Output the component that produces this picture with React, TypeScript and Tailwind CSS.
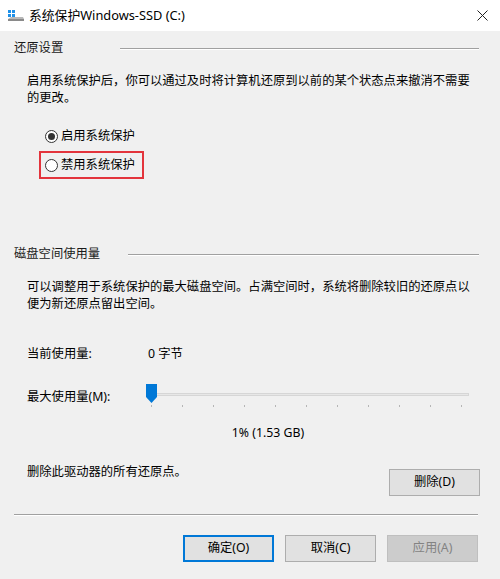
import React from "react";

const font = "font-['Noto_Sans','Noto_Sans_CJK_SC',sans-serif]";

function Radio({ checked }: { checked?: boolean }) {
  return (
    <span className="w-[13px] h-[13px] rounded-full border border-[#333] bg-white flex items-center justify-center shrink-0">
      {checked && <span className="w-[7px] h-[7px] rounded-full bg-[#333]" />}
    </span>
  );
}

function GroupHeader({ title, labelWidth }: { title: string; labelWidth: string }) {
  return (
    <div className="flex items-center h-[17px] pl-[14px] pr-[21px]">
      <span className={`shrink-0 text-[#1a1a1a] ${labelWidth}`}>{title}</span>
      <div className="flex-1 border-t border-[#a0a0a0] border-b border-b-white" />
    </div>
  );
}

function DriveIcon() {
  return (
    <svg width="18" height="14" viewBox="0 0 18 14">
      <rect x="1" y="1" width="3" height="3" fill="#1e90e8" />
      <rect x="5" y="1" width="3" height="3" fill="#1e90e8" />
      <rect x="1" y="5" width="3" height="3" fill="#1e90e8" />
      <rect x="5" y="5" width="3" height="3" fill="#1e90e8" />
      <path d="M1 10 L4 8 H16 L17 10 V12 H1 Z" fill="#b8b8b8" />
      <rect x="1" y="10" width="16" height="2" fill="#8a8a8a" />
    </svg>
  );
}

function Button({
  children,
  primary,
  disabled,
}: {
  children: React.ReactNode;
  primary?: boolean;
  disabled?: boolean;
}) {
  return (
    <button
      className={
        disabled
          ? "w-[91px] h-[27px] bg-[#cccccc] border border-[#bfbfbf] text-[#838383]"
          : primary
          ? "w-[91px] h-[27px] bg-[#e1e1e1] border-2 border-[#0078d7] text-black"
          : "w-[91px] h-[27px] bg-[#e1e1e1] border border-[#adadad] text-black"
      }
    >
      {children}
    </button>
  );
}

export default function App() {
  const ticks = Array.from({ length: 11 }, (_, i) => i);
  return (
    <div className={`w-[500px] h-[579px] bg-[#f0f0f0] flex flex-col text-[12.3px] text-black ${font}`}>
      {/* Title bar */}
      <div className="h-[31px] bg-white flex items-center pl-[7px] pr-[12px]">
        <DriveIcon />
        <span className="ml-[4px] text-[12.8px]">系统保护Windows-SSD (C:)</span>
        <svg className="ml-auto" width="11" height="11" viewBox="0 0 11 11">
          <path d="M0.5 0.5 L10.5 10.5 M10.5 0.5 L0.5 10.5" stroke="#222" strokeWidth="1" />
        </svg>
      </div>

      {/* Restore settings */}
      <div className="mt-[9px]">
        <GroupHeader title="还原设置" labelWidth="w-[106px]" />
      </div>
      <p className="mt-[16px] ml-[27px] w-[448px] leading-[16.5px]">
        启用系统保护后，你可以通过及时将计算机还原到以前的某个状态点来撤消不需要的更改。
      </p>
      <div className="mt-[23px] ml-[45px] flex items-center gap-[3px] h-[14px]">
        <Radio checked />
        <span>启用系统保护</span>
      </div>
      <div className="mt-[8px] ml-[39px] w-[105px] h-[28px] border-2 border-[#e3343c] flex items-center pl-[4px] gap-[3px]">
        <Radio />
        <span>禁用系统保护</span>
      </div>

      {/* Disk space usage */}
      <div className="mt-[67px]">
        <GroupHeader title="磁盘空间使用量" labelWidth="w-[114px]" />
      </div>
      <p className="mt-[16px] ml-[27px] w-[448px] leading-[16.5px]">
        可以调整用于系统保护的最大磁盘空间。占满空间时，系统将删除较旧的还原点以便为新还原点留出空间。
      </p>
      <div className="mt-[34px] ml-[27px] flex items-center h-[17px]">
        <span className="w-[121px]">当前使用量:</span>
        <span>0 字节</span>
      </div>
      <div className="mt-[21px] ml-[27px] flex h-[28px]">
        <span className="w-[119px] mt-[4px]">最大使用量(M):</span>
        <div className="relative w-[323px] h-[28px]">
          <div className="absolute left-[4px] right-0 top-[9px] h-[3px] bg-[#e7e7e7] border border-[#d6d6d6]" />
          <svg className="absolute left-0 top-0" width="11" height="19" viewBox="0 0 11 19">
            <path d="M0 0 H11 V13 L5.5 19 L0 13 Z" fill="#0078d7" />
          </svg>
          {ticks.map((i) => (
            <div
              key={i}
              className="absolute top-[21px] w-px h-[2px] bg-[#b5b5b5]"
              style={{ left: 5 + i * 31 }}
            />
          ))}
        </div>
      </div>
      <div className="mt-[12px] flex justify-center h-[17px] pl-[36px]">1% (1.53 GB)</div>
      <div className="mt-[28px] ml-[27px] mr-[20px] flex">
        <span className="w-[362px] mt-[-6px]">删除此驱动器的所有还原点。</span>
        <Button>删除(D)</Button>
      </div>
      <div className="mt-[18px] mx-[14px] mr-[22px] border-t border-[#a0a0a0] border-b border-b-white" />
      <div className="mt-[19px] flex justify-end gap-[11px] pr-[22px]">
        <Button primary>确定(O)</Button>
        <Button>取消(C)</Button>
        <Button disabled>应用(A)</Button>
      </div>
    </div>
  );
}
